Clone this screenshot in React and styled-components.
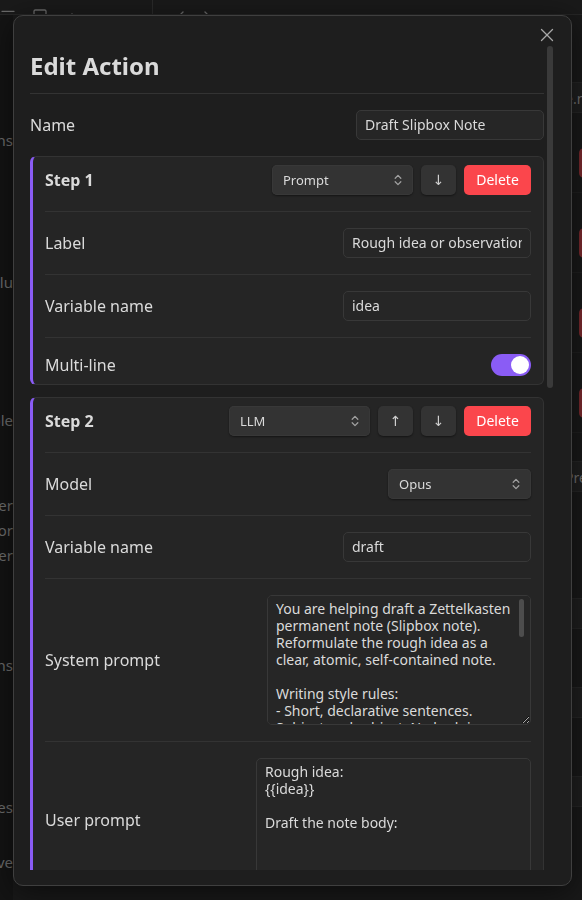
import React from "react";
import styled, { createGlobalStyle } from "styled-components";
import { X, AlignLeft, PanelBottom, ChevronUp, ChevronLeft, ChevronRight } from "lucide-react";

const GlobalStyle = createGlobalStyle`
  html, body {
    margin: 0;
    padding: 0;
    background: #151515;
    overflow: hidden;
    font-family: "Noto Sans", "DejaVu Sans", sans-serif;
  }
  * {
    box-sizing: border-box;
  }
`;

/* ---------- app behind the modal ---------- */

const Workspace = styled.div`
  height: 100vh;
  display: grid;
  grid-template-rows: 15px 1fr;
`;

const TopBar = styled.div`
  display: flex;
  align-items: flex-end;
  background: #1a1a1a;
  border-bottom: 1px solid #262626;
  overflow: hidden;
`;

const TopGroup = styled.div`
  display: flex;
  align-items: flex-end;
  gap: ${(props) => props.$gap || 18}px;
  width: ${(props) => (props.$width ? props.$width + "px" : "auto")};
  height: 100%;
  padding-left: ${(props) => props.$pad || 0}px;
  border-right: ${(props) => (props.$divider ? "1px solid #2a2a2a" : "none")};
  color: #6a6a6a;
  svg {
    margin-bottom: -10px;
  }
`;

const Main = styled.div`
  display: grid;
  grid-template-columns: 13px 1fr;
  overflow: hidden;
`;

const Sidebar = styled.div`
  display: flex;
  flex-direction: column;
  background: #141414;
  overflow: hidden;
`;

const SideItem = styled.div`
  display: flex;
  justify-content: flex-end;
  margin-top: ${(props) => props.$gap}px;
  height: 20px;
  line-height: 20px;
  overflow: hidden;
  white-space: nowrap;
  font-size: 15px;
  color: #6e6e6e;
`;

const Pane = styled.div`
  display: flex;
  flex-direction: column;
  padding-left: 552px;
  padding-top: 67px;
  background: #191919;
  overflow: hidden;
`;

const PaneBand = styled.div`
  height: 31px;
  line-height: 31px;
  margin-top: ${(props) => props.$gap || 0}px;
  background: #1f1f1f;
  border-top: 1px solid #262626;
  border-bottom: 1px solid #262626;
  font-size: 14px;
  color: #707070;
  white-space: nowrap;
`;

const PaneRow = styled.div`
  height: 80px;
  padding-top: 35px;
  padding-left: 14px;
  border-bottom: 1px solid #202020;
`;

const DimButton = styled.div`
  width: 40px;
  height: 30px;
  border-radius: 5px;
  background: #7a2a2d;
`;

/* ---------- modal ---------- */

const Modal = styled.div`
  position: fixed;
  left: 13px;
  top: 15px;
  width: 559px;
  height: 871px;
  display: flex;
  flex-direction: column;
  padding: 16px 17px 15px 16px;
  background: #1e1e1e;
  border: 1px solid #3f3f3f;
  border-radius: 10px;
  box-shadow: 0 6px 30px rgba(0, 0, 0, 0.55);
`;

const CloseButton = styled.button`
  position: absolute;
  top: 7px;
  right: 12px;
  width: 24px;
  height: 24px;
  display: flex;
  align-items: center;
  justify-content: center;
  padding: 0;
  border: none;
  background: transparent;
  color: #a8a8a8;
`;

const ModalScroll = styled.div`
  flex: 1;
  min-height: 0;
  overflow-y: auto;
  padding-right: 10px;
  scrollbar-width: none;
  &::-webkit-scrollbar {
    display: none;
  }
`;

/* scroll indicator drawn over the modal's right edge */
const ScrollThumb = styled.div`
  position: absolute;
  left: 533px;
  top: 30px;
  width: 6px;
  height: 342px;
  border-radius: 3px;
  background: #3a3a3a;
`;

const Title = styled.h2`
  margin: 20px 0 12px;
  font-size: 24px;
  line-height: 1.2;
  font-weight: 700;
  color: #dadada;
`;

const Row = styled.div`
  display: flex;
  align-items: center;
  justify-content: space-between;
  border-top: 1px solid #333;
  padding: 16px 0;
`;

const RowLabel = styled.div`
  font-size: 16px;
  line-height: 22px;
  color: #dadada;
`;

const StepTitle = styled.div`
  font-size: 16px;
  line-height: 22px;
  font-weight: 700;
  color: #dadada;
`;

const StepCard = styled.div`
  margin-bottom: 12px;
  padding: 8px 12px 8px 12px;
  background: #252525;
  border: 1px solid #333;
  border-left: 3px solid #8a5cf5;
  border-radius: 6px;
  & > ${Row}:first-child {
    border-top: none;
    padding-top: 0;
  }
  & > ${Row}:last-child {
    padding-bottom: 0;
  }
`;

const Controls = styled.div`
  display: flex;
  align-items: center;
  gap: 8px;
`;

const TextInput = styled.input`
  width: ${(props) => props.$width || 188}px;
  height: 30px;
  padding: 0 8px;
  background: #262626;
  border: 1px solid #383838;
  border-radius: 5px;
  outline: none;
  font-family: "Noto Sans", "DejaVu Sans", sans-serif;
  font-size: 14px;
  color: #dadada;
`;

const Dropdown = styled.button`
  width: ${(props) => props.$width || 141}px;
  height: 30px;
  display: flex;
  align-items: center;
  justify-content: space-between;
  padding: 0 11px 0 11px;
  background: #333;
  border: none;
  border-radius: 5px;
  box-shadow: 0 1px 2px rgba(0, 0, 0, 0.45), inset 0 0 0 1px #383838;
  font-family: "Noto Sans", "DejaVu Sans", sans-serif;
  font-size: 13px;
  color: #dadada;
  svg {
    color: #a0a0a0;
  }
`;

const MoveButton = styled.button`
  width: 35px;
  height: 30px;
  padding: 0;
  background: #333;
  border: none;
  border-radius: 5px;
  box-shadow: 0 1px 2px rgba(0, 0, 0, 0.45);
  font-family: "DejaVu Sans", sans-serif;
  font-size: 14px;
  color: #cfcfcf;
`;

const DeleteButton = styled.button`
  width: 67px;
  height: 30px;
  padding: 0;
  background: #fb464c;
  border: none;
  border-radius: 5px;
  font-family: "Noto Sans", "DejaVu Sans", sans-serif;
  font-size: 14px;
  color: #fff;
`;

const Toggle = styled.div`
  width: 40px;
  height: 22px;
  padding: 2px;
  display: flex;
  justify-content: ${(props) => (props.$on ? "flex-end" : "flex-start")};
  background: ${(props) => (props.$on ? "#8a5cf5" : "#3f3f3f")};
  border-radius: 11px;
  &::after {
    content: "";
    width: 18px;
    height: 18px;
    border-radius: 50%;
    background: #fff;
  }
`;

const AreaWrap = styled.div`
  position: relative;
  display: flex;
`;

const PromptArea = styled.textarea`
  width: ${(props) => props.$width}px;
  height: ${(props) => props.$height}px;
  padding: 4px 14px 6px 8px;
  background: #262626;
  border: 1px solid #383838;
  border-radius: 5px;
  outline: none;
  font-family: "Noto Sans", "DejaVu Sans", sans-serif;
  font-size: 14px;
  line-height: 17px;
  color: #dadada;
  resize: both;
  scrollbar-width: none;
  &::-webkit-scrollbar {
    display: none;
  }
`;

const AreaThumb = styled.div`
  position: absolute;
  top: 4px;
  right: 7px;
  width: 5px;
  height: 38px;
  border-radius: 3px;
  background: #4d4d4d;
`;

const FooterRow = styled.div`
  display: flex;
  justify-content: flex-end;
  gap: 8px;
  padding: 8px 0 24px;
`;

const PlainButton = styled.button`
  height: 30px;
  padding: 0 14px;
  background: ${(props) => (props.$accent ? "#8a5cf5" : "#333")};
  border: none;
  border-radius: 5px;
  font-family: "Noto Sans", "DejaVu Sans", sans-serif;
  font-size: 14px;
  color: #fff;
`;

const Chevrons = () => (
  <svg width="8" height="12" viewBox="0 0 8 12" fill="none" stroke="currentColor" strokeWidth="1.3" strokeLinecap="round" strokeLinejoin="round">
    <path d="M1.2 4.2 L4 1.4 L6.8 4.2" />
    <path d="M1.2 7.8 L4 10.6 L6.8 7.8" />
  </svg>
);

const systemPrompt =
  "You are helping draft a Zettelkasten permanent note (Slipbox note). Reformulate the rough idea as a clear, atomic, self-contained note.\n\nWriting style rules:\n- Short, declarative sentences. Subject-verb-object. No hedging, no filler.\n- One idea per note.\n- Write in your own words; avoid quoting.\n- Link to related concepts where obvious.";

const userPrompt = "Rough idea:\n{{idea}}\n\nDraft the note body:";

const StepHeader = ({ n, type, up, down }) => (
  <Row>
    <StepTitle>Step {n}</StepTitle>
    <Controls>
      <Dropdown>
        {type}
        <Chevrons />
      </Dropdown>
      {up && <MoveButton>↑</MoveButton>}
      {down && <MoveButton>↓</MoveButton>}
      <DeleteButton>Delete</DeleteButton>
    </Controls>
  </Row>
);

const App = () => {
  return (
    <>
      <GlobalStyle />
      <Workspace>
        <TopBar>
          <TopGroup $width={153} $divider $gap={16}>
            <AlignLeft size={16} />
            <PanelBottom size={16} />
            <ChevronUp size={16} />
          </TopGroup>
          <TopGroup $pad={20} $gap={10}>
            <ChevronLeft size={16} />
            <ChevronRight size={16} />
          </TopGroup>
        </TopBar>
        <Main>
          <Sidebar>
            <SideItem $gap={115}>Actions</SideItem>
            <SideItem $gap={122}>Resolu</SideItem>
            <SideItem $gap={118}>Table</SideItem>
            <SideItem $gap={65}>Header</SideItem>
            <SideItem $gap={5}>Color</SideItem>
            <SideItem $gap={5}>Footer</SideItem>
            <SideItem $gap={90}>Actions</SideItem>
            <SideItem $gap={122}>Notes</SideItem>
            <SideItem $gap={35}>Archive</SideItem>
          </Sidebar>
          <Pane>
            <PaneBand>e.md</PaneBand>
            <PaneRow><DimButton /></PaneRow>
            <PaneRow><DimButton /></PaneRow>
            <PaneRow><DimButton /></PaneRow>
            <PaneRow><DimButton /></PaneRow>
            <PaneBand $gap={28}>Preview</PaneBand>
            <PaneBand $gap={106} />
            <PaneBand $gap={58} />
            <PaneBand $gap={58} />
          </Pane>
        </Main>
      </Workspace>

      <Modal>
        <CloseButton>
          <X size={22} strokeWidth={1.4} />
        </CloseButton>
        <ScrollThumb />
        <ModalScroll>
          <Title>Edit Action</Title>
          <Row>
            <RowLabel>Name</RowLabel>
            <TextInput defaultValue="Draft Slipbox Note" $width={188} />
          </Row>

          <StepCard>
            <StepHeader n={1} type="Prompt" down />
            <Row>
              <RowLabel>Label</RowLabel>
              <TextInput defaultValue="Rough idea or observation" />
            </Row>
            <Row>
              <RowLabel>Variable name</RowLabel>
              <TextInput defaultValue="idea" />
            </Row>
            <Row>
              <RowLabel>Multi-line</RowLabel>
              <Toggle $on />
            </Row>
          </StepCard>

          <StepCard>
            <StepHeader n={2} type="LLM" up down />
            <Row>
              <RowLabel>Model</RowLabel>
              <Dropdown $width={143}>
                Opus
                <Chevrons />
              </Dropdown>
            </Row>
            <Row>
              <RowLabel>Variable name</RowLabel>
              <TextInput defaultValue="draft" />
            </Row>
            <Row>
              <RowLabel>System prompt</RowLabel>
              <AreaWrap>
                <PromptArea $width={264} $height={130} defaultValue={systemPrompt} />
                <AreaThumb />
              </AreaWrap>
            </Row>
            <Row>
              <RowLabel>User prompt</RowLabel>
              <PromptArea $width={275} $height={124} defaultValue={userPrompt} />
            </Row>
            <Row>
              <RowLabel>Max tokens</RowLabel>
              <TextInput defaultValue="1024" />
            </Row>
          </StepCard>

          <StepCard>
            <StepHeader n={3} type="Create note" up />
            <Row>
              <RowLabel>Folder</RowLabel>
              <TextInput defaultValue="Slipbox" />
            </Row>
            <Row>
              <RowLabel>File name</RowLabel>
              <TextInput defaultValue="{{title}}" />
            </Row>
            <Row>
              <RowLabel>Open after creating</RowLabel>
              <Toggle $on />
            </Row>
          </StepCard>

          <FooterRow>
            <PlainButton>Add step</PlainButton>
            <PlainButton $accent>Save</PlainButton>
          </FooterRow>
        </ModalScroll>
      </Modal>
    </>
  );
};

export default App;
